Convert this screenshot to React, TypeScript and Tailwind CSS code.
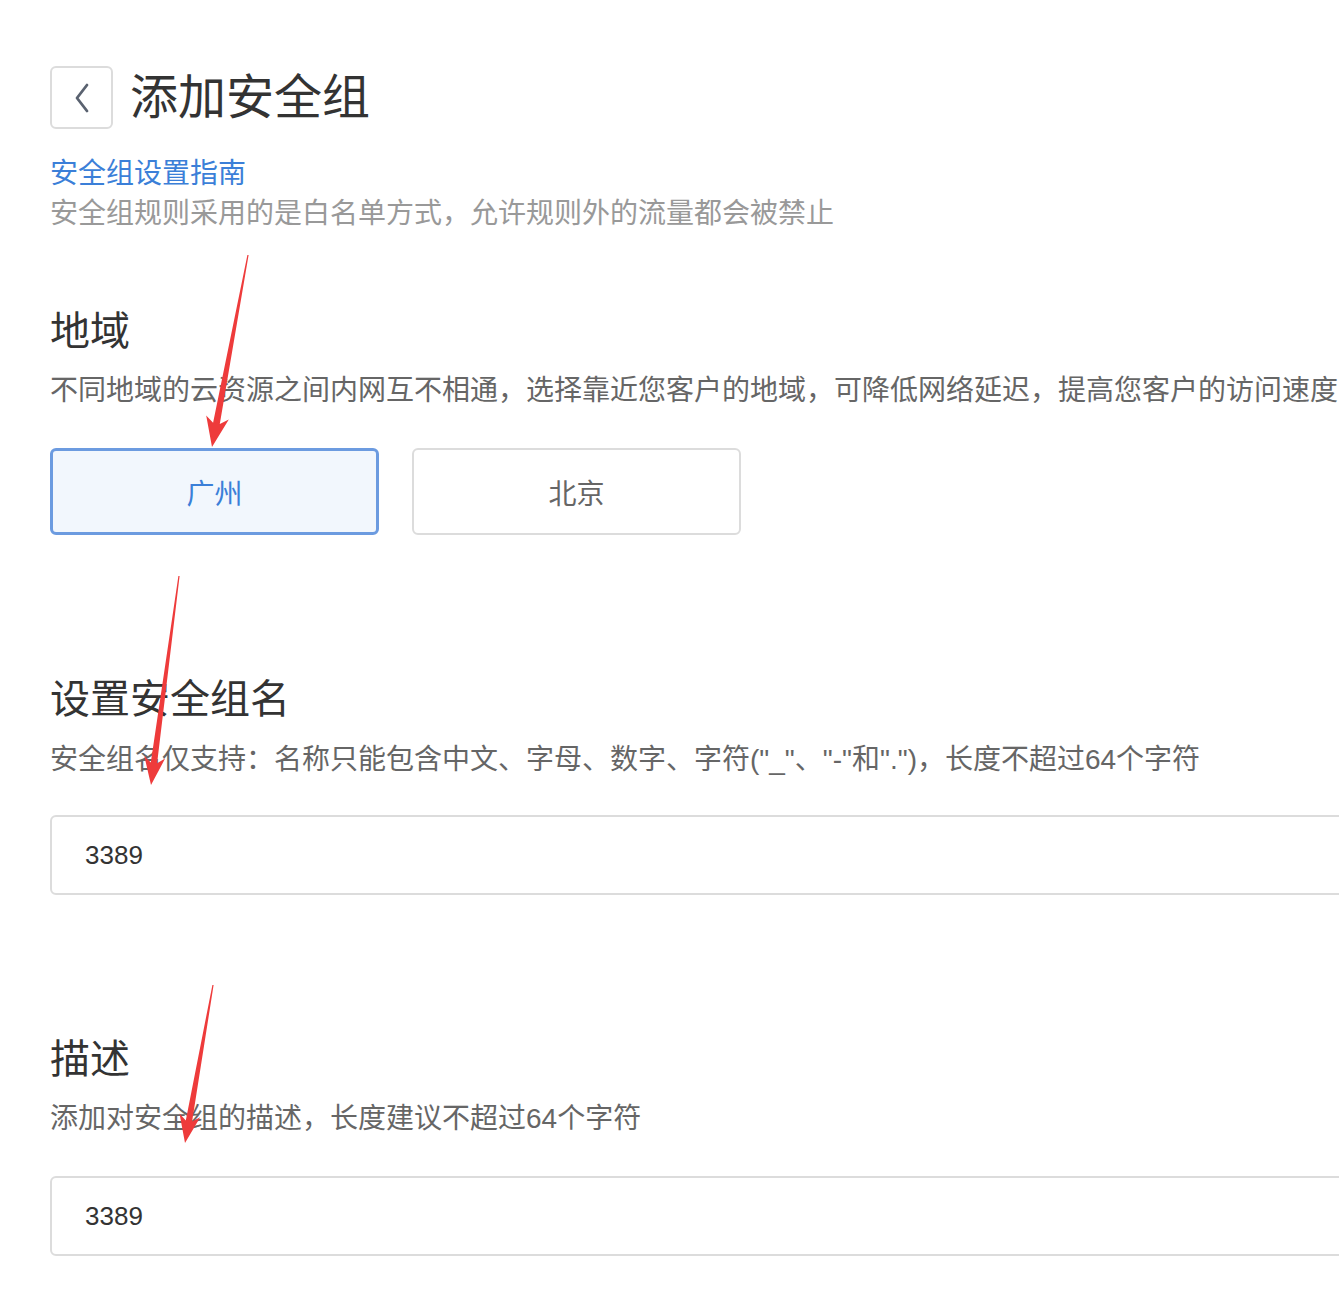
import React from "react";

type Pt = [number, number];

function arrowPoints(tail: Pt, tip: Pt, headLen: number, headHalf: number, shaftHalf: number): string {
  const dx = tip[0] - tail[0];
  const dy = tip[1] - tail[1];
  const len = Math.hypot(dx, dy);
  const ux = dx / len;
  const uy = dy / len;
  const nx = -uy;
  const ny = ux;
  const bx = tip[0] - ux * headLen;
  const by = tip[1] - uy * headLen;
  const nb = headLen * 0.2;
  const bbx = bx + ux * nb;
  const bby = by + uy * nb;
  const pts: Pt[] = [
    [tail[0] + nx * 0.6, tail[1] + ny * 0.6],
    [bbx + nx * shaftHalf, bby + ny * shaftHalf],
    [bx + nx * headHalf, by + ny * headHalf],
    tip,
    [bx - nx * headHalf, by - ny * headHalf],
    [bbx - nx * shaftHalf, bby - ny * shaftHalf],
    [tail[0] - nx * 0.6, tail[1] - ny * 0.6],
  ];
  return pts.map((p) => `${p[0].toFixed(1)},${p[1].toFixed(1)}`).join(" ");
}

function Arrows() {
  return (
    <svg
      className="absolute left-0 top-0 pointer-events-none"
      width={1339}
      height={1295}
      viewBox="0 0 1339 1295"
    >
      <polygon points={arrowPoints([248, 255], [212, 447], 30, 11.5, 3.4)} fill="#ee3b3b" />
      <polygon points={arrowPoints([179, 576], [151, 785], 28, 10.5, 3.2)} fill="#ee3b3b" />
      <polygon points={arrowPoints([213, 985], [185, 1143], 28, 10.5, 3.2)} fill="#ee3b3b" />
    </svg>
  );
}

const font = "font-['Noto_Sans_CJK_SC','Noto_Sans',sans-serif]";
const descFont = "font-['Liberation_Sans','Noto_Sans_CJK_SC',sans-serif]";

export default function App() {
  return (
    <div className={`relative w-[1339px] h-[1295px] overflow-hidden bg-white ${font}`}>
      <div className="pl-[50px] pt-[66px] flex flex-col">
        {/* Title row */}
        <div className="flex items-center h-[63px]">
          <div className="w-[63px] h-[63px] border-2 border-[#dcdcdc] rounded-[6px] flex items-center justify-center shrink-0">
            <svg width="20" height="32" viewBox="0 0 20 32" fill="none">
              <path d="M15 3 L5 16 L15 29" stroke="#5a6270" strokeWidth="2.8" strokeLinecap="round" strokeLinejoin="round" />
            </svg>
          </div>
          <h1 className="ml-[17px] pb-[8px] text-[48px] leading-[55px] text-[#333] whitespace-nowrap">添加安全组</h1>
        </div>

        <a className="mt-[22px] text-[28px] leading-[40px] text-[#3b7fd8] w-fit whitespace-nowrap">安全组设置指南</a>
        <p className="text-[28px] leading-[40px] text-[#999] whitespace-nowrap">
          安全组规则采用的是白名单方式，允许规则外的流量都会被禁止
        </p>

        {/* 地域 */}
        <h2 className="mt-[69px] text-[40px] leading-[56px] text-[#333]">地域</h2>
        <p className="mt-[12px] text-[28px] leading-[40px] text-[#666] whitespace-nowrap">
          不同地域的云资源之间内网互不相通，选择靠近您客户的地域，可降低网络延迟，提高您客户的访问速度
        </p>
        <div className="mt-[40px] flex gap-[33px]">
          <div className="w-[329px] h-[87px] border-[3px] border-[#6c9be0] bg-[#f2f7fd] rounded-[6px] flex items-center justify-center text-[28px] text-[#3b7fd8]">
            广州
          </div>
          <div className="w-[329px] h-[87px] border-2 border-[#dcdcdc] bg-white rounded-[6px] flex items-center justify-center text-[28px] text-[#666]">
            北京
          </div>
        </div>

        {/* 设置安全组名 */}
        <h2 className="mt-[133px] text-[40px] leading-[56px] text-[#333]">设置安全组名</h2>
        <p className={`mt-[16px] text-[28px] leading-[40px] text-[#666] whitespace-nowrap ${descFont}`}>
          安全组名仅支持：名称只能包含中文、字母、数字、字符("_"、"-"和".")，长度不超过64个字符
        </p>
        <div className="mt-[35px] w-[1320px] h-[80px] border-2 border-[#dcdcdc] rounded-[6px] flex items-center pl-[33px] text-[26px] text-[#333] font-['Liberation_Sans',sans-serif]">
          3389
        </div>

        {/* 描述 */}
        <h2 className="mt-[133px] text-[40px] leading-[56px] text-[#333]">描述</h2>
        <p className={`mt-[15px] text-[28px] leading-[40px] text-[#666] whitespace-nowrap ${descFont}`}>
          添加对安全组的描述，长度建议不超过64个字符
        </p>
        <div className="mt-[37px] w-[1320px] h-[80px] border-2 border-[#dcdcdc] rounded-[6px] flex items-center pl-[33px] text-[26px] text-[#333] font-['Liberation_Sans',sans-serif]">
          3389
        </div>
      </div>
      <Arrows />
    </div>
  );
}
